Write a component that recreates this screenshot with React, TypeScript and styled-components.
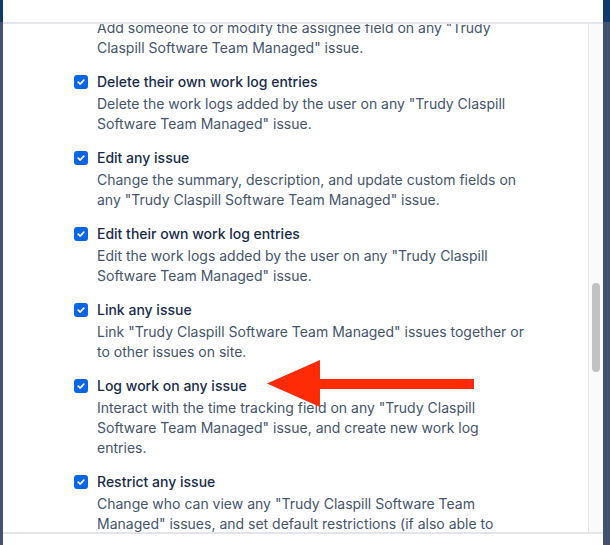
import React, { useLayoutEffect, useRef } from "react";
import styled, { createGlobalStyle } from "styled-components";

const GlobalStyle = createGlobalStyle`
  html, body {
    margin: 0;
    padding: 0;
    overflow: hidden;
    background: #42526e;
  }
  * {
    box-sizing: border-box;
  }
`;

type Permission = {
  title: string;
  lines: string[];
};

const permissions: Permission[] = [
  {
    title: "Change assignee",
    lines: [
      'Add someone to or modify the assignee field on any "Trudy',
      'Claspill Software Team Managed" issue.',
    ],
  },
  {
    title: "Delete their own work log entries",
    lines: [
      'Delete the work logs added by the user on any "Trudy Claspill',
      'Software Team Managed" issue.',
    ],
  },
  {
    title: "Edit any issue",
    lines: [
      "Change the summary, description, and update custom fields on",
      'any "Trudy Claspill Software Team Managed" issue.',
    ],
  },
  {
    title: "Edit their own work log entries",
    lines: [
      'Edit the work logs added by the user on any "Trudy Claspill',
      'Software Team Managed" issue.',
    ],
  },
  {
    title: "Link any issue",
    lines: [
      'Link "Trudy Claspill Software Team Managed" issues together or',
      "to other issues on site.",
    ],
  },
  {
    title: "Log work on any issue",
    lines: [
      'Interact with the time tracking field on any "Trudy Claspill',
      'Software Team Managed" issue, and create new work log',
      "entries.",
    ],
  },
  {
    title: "Restrict any issue",
    lines: [
      'Change who can view any "Trudy Claspill Software Team',
      'Managed" issues, and set default restrictions (if also able to',
      "edit the issue).",
    ],
  },
];

const Page = styled.div`
  display: flex;
  height: 545px;
  width: 610px;
  font-family: Inter, "Noto Sans", "Liberation Sans", sans-serif;
`;

const Backdrop = styled.div<{ $width: number }>`
  flex: 0 0 ${(p) => p.$width}px;
  background: linear-gradient(#0d3b6e 0 22px, #42526e 22px);
`;

const Modal = styled.div`
  position: relative;
  flex: 0 0 600px;
  display: flex;
  flex-direction: column;
  background: #ffffff;
`;

const Header = styled.div`
  flex: 0 0 24px;
  border-bottom: 2px solid #e3e5e9;
`;

const Body = styled.div`
  flex: 1;
  display: flex;
  min-height: 0;
`;

const Viewport = styled.div`
  flex: 1;
  overflow: hidden;
`;

const List = styled.ul`
  list-style: none;
  margin: 0;
  padding: 0 60px 20px 71px;
  display: flex;
  flex-direction: column;
  gap: 14px;
`;

const Item = styled.li`
  display: grid;
  grid-template-columns: 14px 1fr;
  column-gap: 9px;
  row-gap: 2px;
`;

const Box = styled.span`
  width: 14px;
  height: 14px;
  margin-top: 3px;
  border-radius: 3px;
  background: #0c66e4;
  display: flex;
  align-items: center;
  justify-content: center;
`;

const Title = styled.span`
  font-size: 14px;
  line-height: 20px;
  font-weight: 500;
  color: #172b4d;
`;

const Description = styled.p`
  grid-column: 2;
  margin: 0;
  font-size: 14px;
  line-height: 20px;
  color: #44546f;
  white-space: nowrap;
`;

const Track = styled.div`
  flex: 0 0 15px;
  background: #fafafa;
  border-left: 1px solid #e6e6e6;
  padding: 259px 0 0 3px;
`;

const Thumb = styled.div`
  width: 8px;
  height: 89px;
  border-radius: 4px;
  background: #c2c2c2;
`;

const Footer = styled.div`
  flex: 0 0 13px;
  border-top: 2px solid #e3e5e9;
`;

const Arrow = styled.svg`
  position: absolute;
  left: 264px;
  top: 360px;
`;

const Check = () => (
  <svg width="10" height="10" viewBox="0 0 10 10">
    <path
      d="M2.3 5.2 L4.2 7 L7.8 3.2"
      fill="none"
      stroke="#ffffff"
      strokeWidth="1.8"
      strokeLinecap="round"
      strokeLinejoin="round"
    />
  </svg>
);

export default function App() {
  const viewport = useRef<HTMLDivElement>(null);

  useLayoutEffect(() => {
    if (viewport.current) viewport.current.scrollTop = 28;
  }, []);

  return (
    <Page>
      <GlobalStyle />
      <Backdrop $width={3} />
      <Modal>
        <Header />
        <Body>
          <Viewport ref={viewport}>
            <List>
              {permissions.map((p) => (
                <Item key={p.title}>
                  <Box>
                    <Check />
                  </Box>
                  <Title>{p.title}</Title>
                  <Description>
                    {p.lines.map((line, i) => (
                      <React.Fragment key={i}>
                        {i > 0 && <br />}
                        {line}
                      </React.Fragment>
                    ))}
                  </Description>
                </Item>
              ))}
            </List>
          </Viewport>
          <Track>
            <Thumb />
          </Track>
        </Body>
        <Footer />
        <Arrow width="208" height="47" viewBox="0 0 208 47">
          <polygon points="0,23.5 53,0 53,47" fill="#ff2a06" />
          <rect x="52" y="19" width="155" height="10" fill="#ff2a06" />
        </Arrow>
      </Modal>
      <Backdrop $width={7} />
    </Page>
  );
}
